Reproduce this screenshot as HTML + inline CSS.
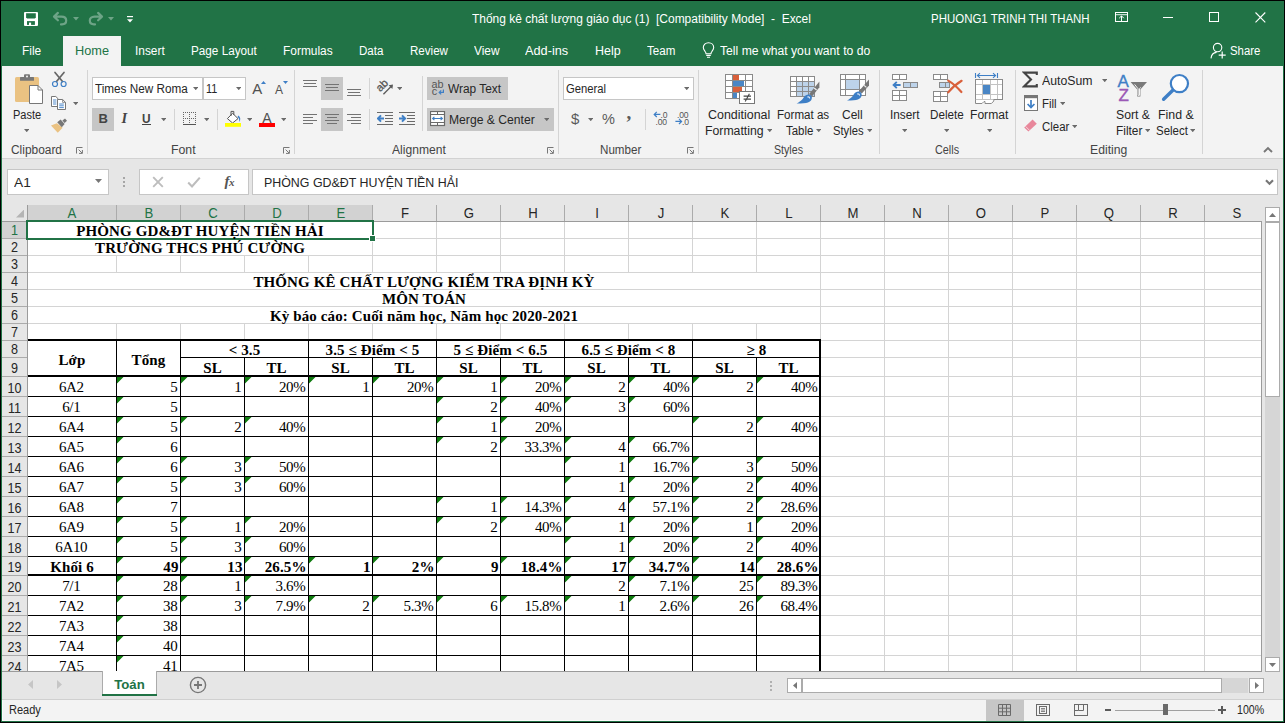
<!DOCTYPE html>
<html><head><meta charset="utf-8"><title>Excel</title>
<style>
html,body{margin:0;padding:0;}
body{width:1285px;height:723px;overflow:hidden;position:relative;background:#000;font-family:"Liberation Sans",sans-serif;}
#r{position:absolute;left:0;top:0;width:1285px;height:723px;overflow:hidden;}
#r div,#r span,#r svg{position:absolute;}
.t{white-space:pre;line-height:1;color:#262626;font-size:12px;}
.s{font-family:"Liberation Serif",serif;}
.b{font-weight:bold;}
</style></head><body><div id="r">
<!-- base -->
<div style="left:0px;top:0px;width:1285px;height:723px;background:#000;"></div>
<div style="left:1px;top:1px;width:1283px;height:721px;background:#217346;"></div>
<div style="left:2px;top:66px;width:1281px;height:92px;background:#f3f3f3;"></div>
<div style="left:63px;top:36px;width:58px;height:30px;background:#f3f3f3;"></div>
<div style="left:2px;top:158px;width:1281px;height:1px;background:#d2d2d2;"></div>
<div style="left:2px;top:159px;width:1281px;height:541px;background:#e6e6e6;"></div>
<div style="left:2px;top:699px;width:1281px;height:1px;background:#d0d0d0;"></div>
<div style="left:2px;top:700px;width:1281px;height:21px;background:#f3f3f3;"></div>
<div style="left:2px;top:720px;width:1281px;height:1px;background:#fbfbfb;"></div>
<div style="left:2px;top:700px;width:1px;height:21px;background:#fbfbfb;"></div>
<!-- grid -->
<div style="left:28px;top:222px;width:1233px;height:449px;background:#fff;"></div>
<div style="left:116px;top:222px;width:1px;height:449px;background:#d4d4d4;"></div>
<div style="left:180px;top:222px;width:1px;height:449px;background:#d4d4d4;"></div>
<div style="left:244px;top:222px;width:1px;height:449px;background:#d4d4d4;"></div>
<div style="left:308px;top:222px;width:1px;height:449px;background:#d4d4d4;"></div>
<div style="left:372px;top:222px;width:1px;height:449px;background:#d4d4d4;"></div>
<div style="left:436px;top:222px;width:1px;height:449px;background:#d4d4d4;"></div>
<div style="left:500px;top:222px;width:1px;height:449px;background:#d4d4d4;"></div>
<div style="left:564px;top:222px;width:1px;height:449px;background:#d4d4d4;"></div>
<div style="left:628px;top:222px;width:1px;height:449px;background:#d4d4d4;"></div>
<div style="left:692px;top:222px;width:1px;height:449px;background:#d4d4d4;"></div>
<div style="left:756px;top:222px;width:1px;height:449px;background:#d4d4d4;"></div>
<div style="left:820px;top:222px;width:1px;height:449px;background:#d4d4d4;"></div>
<div style="left:884px;top:222px;width:1px;height:449px;background:#d4d4d4;"></div>
<div style="left:948px;top:222px;width:1px;height:449px;background:#d4d4d4;"></div>
<div style="left:1012px;top:222px;width:1px;height:449px;background:#d4d4d4;"></div>
<div style="left:1076px;top:222px;width:1px;height:449px;background:#d4d4d4;"></div>
<div style="left:1140px;top:222px;width:1px;height:449px;background:#d4d4d4;"></div>
<div style="left:1204px;top:222px;width:1px;height:449px;background:#d4d4d4;"></div>
<div style="left:28px;top:238px;width:1233px;height:1px;background:#d4d4d4;"></div>
<div style="left:28px;top:255px;width:1233px;height:1px;background:#d4d4d4;"></div>
<div style="left:28px;top:272px;width:1233px;height:1px;background:#d4d4d4;"></div>
<div style="left:28px;top:289px;width:1233px;height:1px;background:#d4d4d4;"></div>
<div style="left:28px;top:306px;width:1233px;height:1px;background:#d4d4d4;"></div>
<div style="left:28px;top:323px;width:1233px;height:1px;background:#d4d4d4;"></div>
<div style="left:28px;top:340px;width:1233px;height:1px;background:#d4d4d4;"></div>
<div style="left:28px;top:357px;width:1233px;height:1px;background:#d4d4d4;"></div>
<div style="left:28px;top:376px;width:1233px;height:1px;background:#d4d4d4;"></div>
<div style="left:28px;top:396px;width:1233px;height:1px;background:#d4d4d4;"></div>
<div style="left:28px;top:416px;width:1233px;height:1px;background:#d4d4d4;"></div>
<div style="left:28px;top:436px;width:1233px;height:1px;background:#d4d4d4;"></div>
<div style="left:28px;top:456px;width:1233px;height:1px;background:#d4d4d4;"></div>
<div style="left:28px;top:476px;width:1233px;height:1px;background:#d4d4d4;"></div>
<div style="left:28px;top:496px;width:1233px;height:1px;background:#d4d4d4;"></div>
<div style="left:28px;top:516px;width:1233px;height:1px;background:#d4d4d4;"></div>
<div style="left:28px;top:536px;width:1233px;height:1px;background:#d4d4d4;"></div>
<div style="left:28px;top:556px;width:1233px;height:1px;background:#d4d4d4;"></div>
<div style="left:28px;top:575px;width:1233px;height:1px;background:#d4d4d4;"></div>
<div style="left:28px;top:595px;width:1233px;height:1px;background:#d4d4d4;"></div>
<div style="left:28px;top:615px;width:1233px;height:1px;background:#d4d4d4;"></div>
<div style="left:28px;top:635px;width:1233px;height:1px;background:#d4d4d4;"></div>
<div style="left:28px;top:655px;width:1233px;height:1px;background:#d4d4d4;"></div>
<div style="left:28px;top:222px;width:344px;height:16px;background:#fff;"></div>
<div style="left:28px;top:239px;width:344px;height:16px;background:#fff;"></div>
<div style="left:28px;top:273px;width:792px;height:16px;background:#fff;"></div>
<div style="left:28px;top:290px;width:792px;height:16px;background:#fff;"></div>
<div style="left:28px;top:307px;width:792px;height:16px;background:#fff;"></div>
<div style="left:28px;top:341px;width:792px;height:330px;background:#fff;"></div>
<div style="left:28px;top:339px;width:793px;height:2px;background:#000;"></div>
<div style="left:28px;top:375px;width:793px;height:2px;background:#000;"></div>
<div style="left:28px;top:574px;width:793px;height:2px;background:#000;"></div>
<div style="left:819px;top:339px;width:2px;height:332px;background:#000;"></div>
<div style="left:181px;top:357px;width:639px;height:1px;background:#000;"></div>
<div style="left:28px;top:396px;width:792px;height:1px;background:#000;"></div>
<div style="left:28px;top:416px;width:792px;height:1px;background:#000;"></div>
<div style="left:28px;top:436px;width:792px;height:1px;background:#000;"></div>
<div style="left:28px;top:456px;width:792px;height:1px;background:#000;"></div>
<div style="left:28px;top:476px;width:792px;height:1px;background:#000;"></div>
<div style="left:28px;top:496px;width:792px;height:1px;background:#000;"></div>
<div style="left:28px;top:516px;width:792px;height:1px;background:#000;"></div>
<div style="left:28px;top:536px;width:792px;height:1px;background:#000;"></div>
<div style="left:28px;top:556px;width:792px;height:1px;background:#000;"></div>
<div style="left:28px;top:595px;width:792px;height:1px;background:#000;"></div>
<div style="left:28px;top:615px;width:792px;height:1px;background:#000;"></div>
<div style="left:28px;top:635px;width:792px;height:1px;background:#000;"></div>
<div style="left:28px;top:655px;width:792px;height:1px;background:#000;"></div>
<div style="left:116px;top:341px;width:1px;height:330px;background:#000;"></div>
<div style="left:180px;top:341px;width:1px;height:330px;background:#000;"></div>
<div style="left:244px;top:358px;width:1px;height:313px;background:#000;"></div>
<div style="left:308px;top:341px;width:1px;height:330px;background:#000;"></div>
<div style="left:372px;top:358px;width:1px;height:313px;background:#000;"></div>
<div style="left:436px;top:341px;width:1px;height:330px;background:#000;"></div>
<div style="left:500px;top:358px;width:1px;height:313px;background:#000;"></div>
<div style="left:564px;top:341px;width:1px;height:330px;background:#000;"></div>
<div style="left:628px;top:358px;width:1px;height:313px;background:#000;"></div>
<div style="left:692px;top:341px;width:1px;height:330px;background:#000;"></div>
<div style="left:756px;top:358px;width:1px;height:313px;background:#000;"></div>
<div style="left:2px;top:205px;width:1260px;height:17px;background:#e6e6e6;"></div>
<div style="left:28px;top:205px;width:345px;height:16px;background:#d2d2d2;"></div>
<div style="left:116px;top:205px;width:1px;height:16px;background:#ababab;"></div>
<div style="left:180px;top:205px;width:1px;height:16px;background:#ababab;"></div>
<div style="left:244px;top:205px;width:1px;height:16px;background:#ababab;"></div>
<div style="left:308px;top:205px;width:1px;height:16px;background:#ababab;"></div>
<div style="left:372px;top:205px;width:1px;height:16px;background:#ababab;"></div>
<div style="left:436px;top:205px;width:1px;height:16px;background:#ababab;"></div>
<div style="left:500px;top:205px;width:1px;height:16px;background:#ababab;"></div>
<div style="left:564px;top:205px;width:1px;height:16px;background:#ababab;"></div>
<div style="left:628px;top:205px;width:1px;height:16px;background:#ababab;"></div>
<div style="left:692px;top:205px;width:1px;height:16px;background:#ababab;"></div>
<div style="left:756px;top:205px;width:1px;height:16px;background:#ababab;"></div>
<div style="left:820px;top:205px;width:1px;height:16px;background:#ababab;"></div>
<div style="left:884px;top:205px;width:1px;height:16px;background:#ababab;"></div>
<div style="left:948px;top:205px;width:1px;height:16px;background:#ababab;"></div>
<div style="left:1012px;top:205px;width:1px;height:16px;background:#ababab;"></div>
<div style="left:1076px;top:205px;width:1px;height:16px;background:#ababab;"></div>
<div style="left:1140px;top:205px;width:1px;height:16px;background:#ababab;"></div>
<div style="left:1204px;top:205px;width:1px;height:16px;background:#ababab;"></div>
<div style="left:2px;top:221px;width:1260px;height:1px;background:#9b9b9b;"></div>
<div style="left:27px;top:205px;width:1px;height:466px;background:#9b9b9b;"></div>
<svg style="left:15.5px;top:209.3px" width="8.5" height="8.5" viewBox="0 0 8.5 8.5"><path d="M8.5 0 L8.5 8.5 L0 8.5 Z" fill="#b4b4b4"/></svg>
<span class="t " style="left:52.0px;top:206.3px;width:40px;text-align:center;font-size:14px;transform:scaleX(0.94);color:#217346;">A</span>
<span class="t " style="left:128.5px;top:206.3px;width:40px;text-align:center;font-size:14px;transform:scaleX(0.94);color:#217346;">B</span>
<span class="t " style="left:192.5px;top:206.3px;width:40px;text-align:center;font-size:14px;transform:scaleX(0.94);color:#217346;">C</span>
<span class="t " style="left:256.5px;top:206.3px;width:40px;text-align:center;font-size:14px;transform:scaleX(0.94);color:#217346;">D</span>
<span class="t " style="left:320.5px;top:206.3px;width:40px;text-align:center;font-size:14px;transform:scaleX(0.94);color:#217346;">E</span>
<span class="t " style="left:384.5px;top:206.3px;width:40px;text-align:center;font-size:14px;transform:scaleX(0.94);color:#262626;">F</span>
<span class="t " style="left:448.5px;top:206.3px;width:40px;text-align:center;font-size:14px;transform:scaleX(0.94);color:#262626;">G</span>
<span class="t " style="left:512.5px;top:206.3px;width:40px;text-align:center;font-size:14px;transform:scaleX(0.94);color:#262626;">H</span>
<span class="t " style="left:576.5px;top:206.3px;width:40px;text-align:center;font-size:14px;transform:scaleX(0.94);color:#262626;">I</span>
<span class="t " style="left:640.5px;top:206.3px;width:40px;text-align:center;font-size:14px;transform:scaleX(0.94);color:#262626;">J</span>
<span class="t " style="left:704.5px;top:206.3px;width:40px;text-align:center;font-size:14px;transform:scaleX(0.94);color:#262626;">K</span>
<span class="t " style="left:768.5px;top:206.3px;width:40px;text-align:center;font-size:14px;transform:scaleX(0.94);color:#262626;">L</span>
<span class="t " style="left:832.5px;top:206.3px;width:40px;text-align:center;font-size:14px;transform:scaleX(0.94);color:#262626;">M</span>
<span class="t " style="left:896.5px;top:206.3px;width:40px;text-align:center;font-size:14px;transform:scaleX(0.94);color:#262626;">N</span>
<span class="t " style="left:960.5px;top:206.3px;width:40px;text-align:center;font-size:14px;transform:scaleX(0.94);color:#262626;">O</span>
<span class="t " style="left:1024.5px;top:206.3px;width:40px;text-align:center;font-size:14px;transform:scaleX(0.94);color:#262626;">P</span>
<span class="t " style="left:1088.5px;top:206.3px;width:40px;text-align:center;font-size:14px;transform:scaleX(0.94);color:#262626;">Q</span>
<span class="t " style="left:1152.5px;top:206.3px;width:40px;text-align:center;font-size:14px;transform:scaleX(0.94);color:#262626;">R</span>
<span class="t " style="left:1216.5px;top:206.3px;width:40px;text-align:center;font-size:14px;transform:scaleX(0.94);color:#262626;">S</span>
<div style="left:2px;top:222px;width:25px;height:449px;background:#e6e6e6;"></div>
<div style="left:2px;top:222px;width:25px;height:17px;background:#d2d2d2;"></div>
<div style="left:2px;top:238px;width:25px;height:1px;background:#ababab;"></div>
<span class="t " style="left:2px;top:223px;width:25px;text-align:center;font-size:14px;transform:scaleX(0.9);color:#217346;">1</span>
<div style="left:2px;top:255px;width:25px;height:1px;background:#ababab;"></div>
<span class="t " style="left:2px;top:240px;width:25px;text-align:center;font-size:14px;transform:scaleX(0.9);color:#262626;">2</span>
<div style="left:2px;top:272px;width:25px;height:1px;background:#ababab;"></div>
<span class="t " style="left:2px;top:257px;width:25px;text-align:center;font-size:14px;transform:scaleX(0.9);color:#262626;">3</span>
<div style="left:2px;top:289px;width:25px;height:1px;background:#ababab;"></div>
<span class="t " style="left:2px;top:274px;width:25px;text-align:center;font-size:14px;transform:scaleX(0.9);color:#262626;">4</span>
<div style="left:2px;top:306px;width:25px;height:1px;background:#ababab;"></div>
<span class="t " style="left:2px;top:291px;width:25px;text-align:center;font-size:14px;transform:scaleX(0.9);color:#262626;">5</span>
<div style="left:2px;top:323px;width:25px;height:1px;background:#ababab;"></div>
<span class="t " style="left:2px;top:308px;width:25px;text-align:center;font-size:14px;transform:scaleX(0.9);color:#262626;">6</span>
<div style="left:2px;top:340px;width:25px;height:1px;background:#ababab;"></div>
<span class="t " style="left:2px;top:325px;width:25px;text-align:center;font-size:14px;transform:scaleX(0.9);color:#262626;">7</span>
<div style="left:2px;top:357px;width:25px;height:1px;background:#ababab;"></div>
<span class="t " style="left:2px;top:342px;width:25px;text-align:center;font-size:14px;transform:scaleX(0.9);color:#262626;">8</span>
<div style="left:2px;top:376px;width:25px;height:1px;background:#ababab;"></div>
<span class="t " style="left:2px;top:360.5px;width:25px;text-align:center;font-size:14px;transform:scaleX(0.9);color:#262626;">9</span>
<div style="left:2px;top:396px;width:25px;height:1px;background:#ababab;"></div>
<span class="t " style="left:2px;top:381px;width:25px;text-align:center;font-size:14px;transform:scaleX(0.9);color:#262626;">10</span>
<div style="left:2px;top:416px;width:25px;height:1px;background:#ababab;"></div>
<span class="t " style="left:2px;top:401px;width:25px;text-align:center;font-size:14px;transform:scaleX(0.9);color:#262626;">11</span>
<div style="left:2px;top:436px;width:25px;height:1px;background:#ababab;"></div>
<span class="t " style="left:2px;top:421px;width:25px;text-align:center;font-size:14px;transform:scaleX(0.9);color:#262626;">12</span>
<div style="left:2px;top:456px;width:25px;height:1px;background:#ababab;"></div>
<span class="t " style="left:2px;top:441px;width:25px;text-align:center;font-size:14px;transform:scaleX(0.9);color:#262626;">13</span>
<div style="left:2px;top:476px;width:25px;height:1px;background:#ababab;"></div>
<span class="t " style="left:2px;top:461px;width:25px;text-align:center;font-size:14px;transform:scaleX(0.9);color:#262626;">14</span>
<div style="left:2px;top:496px;width:25px;height:1px;background:#ababab;"></div>
<span class="t " style="left:2px;top:481px;width:25px;text-align:center;font-size:14px;transform:scaleX(0.9);color:#262626;">15</span>
<div style="left:2px;top:516px;width:25px;height:1px;background:#ababab;"></div>
<span class="t " style="left:2px;top:501px;width:25px;text-align:center;font-size:14px;transform:scaleX(0.9);color:#262626;">16</span>
<div style="left:2px;top:536px;width:25px;height:1px;background:#ababab;"></div>
<span class="t " style="left:2px;top:521px;width:25px;text-align:center;font-size:14px;transform:scaleX(0.9);color:#262626;">17</span>
<div style="left:2px;top:556px;width:25px;height:1px;background:#ababab;"></div>
<span class="t " style="left:2px;top:541px;width:25px;text-align:center;font-size:14px;transform:scaleX(0.9);color:#262626;">18</span>
<div style="left:2px;top:575px;width:25px;height:1px;background:#ababab;"></div>
<span class="t " style="left:2px;top:560px;width:25px;text-align:center;font-size:14px;transform:scaleX(0.9);color:#262626;">19</span>
<div style="left:2px;top:595px;width:25px;height:1px;background:#ababab;"></div>
<span class="t " style="left:2px;top:580px;width:25px;text-align:center;font-size:14px;transform:scaleX(0.9);color:#262626;">20</span>
<div style="left:2px;top:615px;width:25px;height:1px;background:#ababab;"></div>
<span class="t " style="left:2px;top:600px;width:25px;text-align:center;font-size:14px;transform:scaleX(0.9);color:#262626;">21</span>
<div style="left:2px;top:635px;width:25px;height:1px;background:#ababab;"></div>
<span class="t " style="left:2px;top:620px;width:25px;text-align:center;font-size:14px;transform:scaleX(0.9);color:#262626;">22</span>
<div style="left:2px;top:655px;width:25px;height:1px;background:#ababab;"></div>
<span class="t " style="left:2px;top:640px;width:25px;text-align:center;font-size:14px;transform:scaleX(0.9);color:#262626;">23</span>
<span class="t " style="left:2px;top:660px;width:25px;text-align:center;font-size:14px;transform:scaleX(0.9);color:#262626;">24</span>
<div style="left:1261px;top:221px;width:1px;height:451px;background:#9b9b9b;"></div>
<div style="left:2px;top:671px;width:1260px;height:1px;background:#9b9b9b;"></div>
<div style="left:26px;top:220px;width:344px;height:16px;border:2px solid #217346;"></div>
<div style="left:369px;top:235px;width:7px;height:7px;background:#fff;"></div>
<div style="left:370px;top:236px;width:5px;height:5px;background:#217346;"></div>
<span class="t s b" style="left:28px;top:223.5px;width:344px;font-size:15px;letter-spacing:0.12px;text-align:center;color:#000;">PHÒNG GD&amp;ĐT HUYỆN TIỀN HẢI</span>
<span class="t s b" style="left:28px;top:240.5px;width:344px;font-size:15px;letter-spacing:0.12px;text-align:center;color:#000;">TRƯỜNG THCS PHÚ CƯỜNG</span>
<span class="t s b" style="left:28px;top:274.5px;width:792px;font-size:15px;letter-spacing:0.12px;text-align:center;color:#000;">THỐNG KÊ CHẤT LƯỢNG KIỂM TRA ĐỊNH KỲ</span>
<span class="t s b" style="left:28px;top:291.5px;width:792px;font-size:15px;letter-spacing:0.12px;text-align:center;color:#000;">MÔN TOÁN</span>
<span class="t s b" style="left:28px;top:308.5px;width:792px;font-size:15px;letter-spacing:0.12px;text-align:center;color:#000;">Kỳ báo cáo: Cuối năm học, Năm học 2020-2021</span>
<span class="t s b" style="left:28px;top:352.5px;width:88px;font-size:15px;letter-spacing:0.12px;text-align:center;color:#000;">Lớp</span>
<span class="t s b" style="left:117px;top:352.5px;width:63px;font-size:15px;letter-spacing:0.12px;text-align:center;color:#000;">Tổng</span>
<span class="t s b" style="left:181px;top:342.5px;width:127px;font-size:15px;letter-spacing:0.12px;text-align:center;color:#000;">&lt; 3.5</span>
<span class="t s b" style="left:181px;top:360.5px;width:63px;font-size:15px;letter-spacing:0.12px;text-align:center;color:#000;">SL</span>
<span class="t s b" style="left:245px;top:360.5px;width:63px;font-size:15px;letter-spacing:0.12px;text-align:center;color:#000;">TL</span>
<span class="t s b" style="left:309px;top:342.5px;width:127px;font-size:15px;letter-spacing:0.12px;text-align:center;color:#000;">3.5 ≤ Điểm &lt; 5</span>
<span class="t s b" style="left:309px;top:360.5px;width:63px;font-size:15px;letter-spacing:0.12px;text-align:center;color:#000;">SL</span>
<span class="t s b" style="left:373px;top:360.5px;width:63px;font-size:15px;letter-spacing:0.12px;text-align:center;color:#000;">TL</span>
<span class="t s b" style="left:437px;top:342.5px;width:127px;font-size:15px;letter-spacing:0.12px;text-align:center;color:#000;">5 ≤ Điểm &lt; 6.5</span>
<span class="t s b" style="left:437px;top:360.5px;width:63px;font-size:15px;letter-spacing:0.12px;text-align:center;color:#000;">SL</span>
<span class="t s b" style="left:501px;top:360.5px;width:63px;font-size:15px;letter-spacing:0.12px;text-align:center;color:#000;">TL</span>
<span class="t s b" style="left:565px;top:342.5px;width:127px;font-size:15px;letter-spacing:0.12px;text-align:center;color:#000;">6.5 ≤ Điểm &lt; 8</span>
<span class="t s b" style="left:565px;top:360.5px;width:63px;font-size:15px;letter-spacing:0.12px;text-align:center;color:#000;">SL</span>
<span class="t s b" style="left:629px;top:360.5px;width:63px;font-size:15px;letter-spacing:0.12px;text-align:center;color:#000;">TL</span>
<span class="t s b" style="left:693px;top:342.5px;width:127px;font-size:15px;letter-spacing:0.12px;text-align:center;color:#000;">≥ 8</span>
<span class="t s b" style="left:693px;top:360.5px;width:63px;font-size:15px;letter-spacing:0.12px;text-align:center;color:#000;">SL</span>
<span class="t s b" style="left:757px;top:360.5px;width:63px;font-size:15px;letter-spacing:0.12px;text-align:center;color:#000;">TL</span>
<span class="t s" style="left:28px;top:379.5px;width:86.5px;font-size:15px;letter-spacing:-0.38px;text-align:center;color:#000;">6A2</span>
<span class="t s" style="left:117px;top:379.5px;width:60.32px;font-size:15px;letter-spacing:-0.38px;text-align:right;color:#000;">5</span>
<span class="t s" style="left:181px;top:379.5px;width:60.32px;font-size:15px;letter-spacing:-0.38px;text-align:right;color:#000;">1</span>
<span class="t s" style="left:245px;top:379.5px;width:60.32px;font-size:15px;letter-spacing:-0.38px;text-align:right;color:#000;">20%</span>
<span class="t s" style="left:309px;top:379.5px;width:60.32px;font-size:15px;letter-spacing:-0.38px;text-align:right;color:#000;">1</span>
<span class="t s" style="left:373px;top:379.5px;width:60.32px;font-size:15px;letter-spacing:-0.38px;text-align:right;color:#000;">20%</span>
<span class="t s" style="left:437px;top:379.5px;width:60.32px;font-size:15px;letter-spacing:-0.38px;text-align:right;color:#000;">1</span>
<span class="t s" style="left:501px;top:379.5px;width:60.32px;font-size:15px;letter-spacing:-0.38px;text-align:right;color:#000;">20%</span>
<span class="t s" style="left:565px;top:379.5px;width:60.32px;font-size:15px;letter-spacing:-0.38px;text-align:right;color:#000;">2</span>
<span class="t s" style="left:629px;top:379.5px;width:60.32px;font-size:15px;letter-spacing:-0.38px;text-align:right;color:#000;">40%</span>
<span class="t s" style="left:693px;top:379.5px;width:60.32px;font-size:15px;letter-spacing:-0.38px;text-align:right;color:#000;">2</span>
<span class="t s" style="left:757px;top:379.5px;width:60.32px;font-size:15px;letter-spacing:-0.38px;text-align:right;color:#000;">40%</span>
<span class="t s" style="left:28px;top:399.5px;width:86.5px;font-size:15px;letter-spacing:-0.38px;text-align:center;color:#000;">6/1</span>
<span class="t s" style="left:117px;top:399.5px;width:60.32px;font-size:15px;letter-spacing:-0.38px;text-align:right;color:#000;">5</span>
<span class="t s" style="left:437px;top:399.5px;width:60.32px;font-size:15px;letter-spacing:-0.38px;text-align:right;color:#000;">2</span>
<span class="t s" style="left:501px;top:399.5px;width:60.32px;font-size:15px;letter-spacing:-0.38px;text-align:right;color:#000;">40%</span>
<span class="t s" style="left:565px;top:399.5px;width:60.32px;font-size:15px;letter-spacing:-0.38px;text-align:right;color:#000;">3</span>
<span class="t s" style="left:629px;top:399.5px;width:60.32px;font-size:15px;letter-spacing:-0.38px;text-align:right;color:#000;">60%</span>
<span class="t s" style="left:28px;top:419.5px;width:86.5px;font-size:15px;letter-spacing:-0.38px;text-align:center;color:#000;">6A4</span>
<span class="t s" style="left:117px;top:419.5px;width:60.32px;font-size:15px;letter-spacing:-0.38px;text-align:right;color:#000;">5</span>
<span class="t s" style="left:181px;top:419.5px;width:60.32px;font-size:15px;letter-spacing:-0.38px;text-align:right;color:#000;">2</span>
<span class="t s" style="left:245px;top:419.5px;width:60.32px;font-size:15px;letter-spacing:-0.38px;text-align:right;color:#000;">40%</span>
<span class="t s" style="left:437px;top:419.5px;width:60.32px;font-size:15px;letter-spacing:-0.38px;text-align:right;color:#000;">1</span>
<span class="t s" style="left:501px;top:419.5px;width:60.32px;font-size:15px;letter-spacing:-0.38px;text-align:right;color:#000;">20%</span>
<span class="t s" style="left:693px;top:419.5px;width:60.32px;font-size:15px;letter-spacing:-0.38px;text-align:right;color:#000;">2</span>
<span class="t s" style="left:757px;top:419.5px;width:60.32px;font-size:15px;letter-spacing:-0.38px;text-align:right;color:#000;">40%</span>
<span class="t s" style="left:28px;top:439.5px;width:86.5px;font-size:15px;letter-spacing:-0.38px;text-align:center;color:#000;">6A5</span>
<span class="t s" style="left:117px;top:439.5px;width:60.32px;font-size:15px;letter-spacing:-0.38px;text-align:right;color:#000;">6</span>
<span class="t s" style="left:437px;top:439.5px;width:60.32px;font-size:15px;letter-spacing:-0.38px;text-align:right;color:#000;">2</span>
<span class="t s" style="left:501px;top:439.5px;width:60.32px;font-size:15px;letter-spacing:-0.38px;text-align:right;color:#000;">33.3%</span>
<span class="t s" style="left:565px;top:439.5px;width:60.32px;font-size:15px;letter-spacing:-0.38px;text-align:right;color:#000;">4</span>
<span class="t s" style="left:629px;top:439.5px;width:60.32px;font-size:15px;letter-spacing:-0.38px;text-align:right;color:#000;">66.7%</span>
<span class="t s" style="left:28px;top:459.5px;width:86.5px;font-size:15px;letter-spacing:-0.38px;text-align:center;color:#000;">6A6</span>
<span class="t s" style="left:117px;top:459.5px;width:60.32px;font-size:15px;letter-spacing:-0.38px;text-align:right;color:#000;">6</span>
<span class="t s" style="left:181px;top:459.5px;width:60.32px;font-size:15px;letter-spacing:-0.38px;text-align:right;color:#000;">3</span>
<span class="t s" style="left:245px;top:459.5px;width:60.32px;font-size:15px;letter-spacing:-0.38px;text-align:right;color:#000;">50%</span>
<span class="t s" style="left:565px;top:459.5px;width:60.32px;font-size:15px;letter-spacing:-0.38px;text-align:right;color:#000;">1</span>
<span class="t s" style="left:629px;top:459.5px;width:60.32px;font-size:15px;letter-spacing:-0.38px;text-align:right;color:#000;">16.7%</span>
<span class="t s" style="left:693px;top:459.5px;width:60.32px;font-size:15px;letter-spacing:-0.38px;text-align:right;color:#000;">3</span>
<span class="t s" style="left:757px;top:459.5px;width:60.32px;font-size:15px;letter-spacing:-0.38px;text-align:right;color:#000;">50%</span>
<span class="t s" style="left:28px;top:479.5px;width:86.5px;font-size:15px;letter-spacing:-0.38px;text-align:center;color:#000;">6A7</span>
<span class="t s" style="left:117px;top:479.5px;width:60.32px;font-size:15px;letter-spacing:-0.38px;text-align:right;color:#000;">5</span>
<span class="t s" style="left:181px;top:479.5px;width:60.32px;font-size:15px;letter-spacing:-0.38px;text-align:right;color:#000;">3</span>
<span class="t s" style="left:245px;top:479.5px;width:60.32px;font-size:15px;letter-spacing:-0.38px;text-align:right;color:#000;">60%</span>
<span class="t s" style="left:565px;top:479.5px;width:60.32px;font-size:15px;letter-spacing:-0.38px;text-align:right;color:#000;">1</span>
<span class="t s" style="left:629px;top:479.5px;width:60.32px;font-size:15px;letter-spacing:-0.38px;text-align:right;color:#000;">20%</span>
<span class="t s" style="left:693px;top:479.5px;width:60.32px;font-size:15px;letter-spacing:-0.38px;text-align:right;color:#000;">2</span>
<span class="t s" style="left:757px;top:479.5px;width:60.32px;font-size:15px;letter-spacing:-0.38px;text-align:right;color:#000;">40%</span>
<span class="t s" style="left:28px;top:499.5px;width:86.5px;font-size:15px;letter-spacing:-0.38px;text-align:center;color:#000;">6A8</span>
<span class="t s" style="left:117px;top:499.5px;width:60.32px;font-size:15px;letter-spacing:-0.38px;text-align:right;color:#000;">7</span>
<span class="t s" style="left:437px;top:499.5px;width:60.32px;font-size:15px;letter-spacing:-0.38px;text-align:right;color:#000;">1</span>
<span class="t s" style="left:501px;top:499.5px;width:60.32px;font-size:15px;letter-spacing:-0.38px;text-align:right;color:#000;">14.3%</span>
<span class="t s" style="left:565px;top:499.5px;width:60.32px;font-size:15px;letter-spacing:-0.38px;text-align:right;color:#000;">4</span>
<span class="t s" style="left:629px;top:499.5px;width:60.32px;font-size:15px;letter-spacing:-0.38px;text-align:right;color:#000;">57.1%</span>
<span class="t s" style="left:693px;top:499.5px;width:60.32px;font-size:15px;letter-spacing:-0.38px;text-align:right;color:#000;">2</span>
<span class="t s" style="left:757px;top:499.5px;width:60.32px;font-size:15px;letter-spacing:-0.38px;text-align:right;color:#000;">28.6%</span>
<span class="t s" style="left:28px;top:519.5px;width:86.5px;font-size:15px;letter-spacing:-0.38px;text-align:center;color:#000;">6A9</span>
<span class="t s" style="left:117px;top:519.5px;width:60.32px;font-size:15px;letter-spacing:-0.38px;text-align:right;color:#000;">5</span>
<span class="t s" style="left:181px;top:519.5px;width:60.32px;font-size:15px;letter-spacing:-0.38px;text-align:right;color:#000;">1</span>
<span class="t s" style="left:245px;top:519.5px;width:60.32px;font-size:15px;letter-spacing:-0.38px;text-align:right;color:#000;">20%</span>
<span class="t s" style="left:437px;top:519.5px;width:60.32px;font-size:15px;letter-spacing:-0.38px;text-align:right;color:#000;">2</span>
<span class="t s" style="left:501px;top:519.5px;width:60.32px;font-size:15px;letter-spacing:-0.38px;text-align:right;color:#000;">40%</span>
<span class="t s" style="left:565px;top:519.5px;width:60.32px;font-size:15px;letter-spacing:-0.38px;text-align:right;color:#000;">1</span>
<span class="t s" style="left:629px;top:519.5px;width:60.32px;font-size:15px;letter-spacing:-0.38px;text-align:right;color:#000;">20%</span>
<span class="t s" style="left:693px;top:519.5px;width:60.32px;font-size:15px;letter-spacing:-0.38px;text-align:right;color:#000;">1</span>
<span class="t s" style="left:757px;top:519.5px;width:60.32px;font-size:15px;letter-spacing:-0.38px;text-align:right;color:#000;">20%</span>
<span class="t s" style="left:28px;top:539.5px;width:86.5px;font-size:15px;letter-spacing:-0.38px;text-align:center;color:#000;">6A10</span>
<span class="t s" style="left:117px;top:539.5px;width:60.32px;font-size:15px;letter-spacing:-0.38px;text-align:right;color:#000;">5</span>
<span class="t s" style="left:181px;top:539.5px;width:60.32px;font-size:15px;letter-spacing:-0.38px;text-align:right;color:#000;">3</span>
<span class="t s" style="left:245px;top:539.5px;width:60.32px;font-size:15px;letter-spacing:-0.38px;text-align:right;color:#000;">60%</span>
<span class="t s" style="left:565px;top:539.5px;width:60.32px;font-size:15px;letter-spacing:-0.38px;text-align:right;color:#000;">1</span>
<span class="t s" style="left:629px;top:539.5px;width:60.32px;font-size:15px;letter-spacing:-0.38px;text-align:right;color:#000;">20%</span>
<span class="t s" style="left:693px;top:539.5px;width:60.32px;font-size:15px;letter-spacing:-0.38px;text-align:right;color:#000;">2</span>
<span class="t s" style="left:757px;top:539.5px;width:60.32px;font-size:15px;letter-spacing:-0.38px;text-align:right;color:#000;">40%</span>
<span class="t s b" style="left:28px;top:559.5px;width:88px;font-size:15px;letter-spacing:0.12px;text-align:center;color:#000;">Khối 6</span>
<span class="t s b" style="left:117px;top:559.5px;width:61.62px;font-size:15px;letter-spacing:0.12px;text-align:right;color:#000;">49</span>
<span class="t s b" style="left:181px;top:559.5px;width:61.62px;font-size:15px;letter-spacing:0.12px;text-align:right;color:#000;">13</span>
<span class="t s b" style="left:245px;top:559.5px;width:61.62px;font-size:15px;letter-spacing:0.12px;text-align:right;color:#000;">26.5%</span>
<span class="t s b" style="left:309px;top:559.5px;width:61.62px;font-size:15px;letter-spacing:0.12px;text-align:right;color:#000;">1</span>
<span class="t s b" style="left:373px;top:559.5px;width:61.62px;font-size:15px;letter-spacing:0.12px;text-align:right;color:#000;">2%</span>
<span class="t s b" style="left:437px;top:559.5px;width:61.62px;font-size:15px;letter-spacing:0.12px;text-align:right;color:#000;">9</span>
<span class="t s b" style="left:501px;top:559.5px;width:61.62px;font-size:15px;letter-spacing:0.12px;text-align:right;color:#000;">18.4%</span>
<span class="t s b" style="left:565px;top:559.5px;width:61.62px;font-size:15px;letter-spacing:0.12px;text-align:right;color:#000;">17</span>
<span class="t s b" style="left:629px;top:559.5px;width:61.62px;font-size:15px;letter-spacing:0.12px;text-align:right;color:#000;">34.7%</span>
<span class="t s b" style="left:693px;top:559.5px;width:61.62px;font-size:15px;letter-spacing:0.12px;text-align:right;color:#000;">14</span>
<span class="t s b" style="left:757px;top:559.5px;width:61.62px;font-size:15px;letter-spacing:0.12px;text-align:right;color:#000;">28.6%</span>
<span class="t s" style="left:28px;top:578.5px;width:86.5px;font-size:15px;letter-spacing:-0.38px;text-align:center;color:#000;">7/1</span>
<span class="t s" style="left:117px;top:578.5px;width:60.32px;font-size:15px;letter-spacing:-0.38px;text-align:right;color:#000;">28</span>
<span class="t s" style="left:181px;top:578.5px;width:60.32px;font-size:15px;letter-spacing:-0.38px;text-align:right;color:#000;">1</span>
<span class="t s" style="left:245px;top:578.5px;width:60.32px;font-size:15px;letter-spacing:-0.38px;text-align:right;color:#000;">3.6%</span>
<span class="t s" style="left:565px;top:578.5px;width:60.32px;font-size:15px;letter-spacing:-0.38px;text-align:right;color:#000;">2</span>
<span class="t s" style="left:629px;top:578.5px;width:60.32px;font-size:15px;letter-spacing:-0.38px;text-align:right;color:#000;">7.1%</span>
<span class="t s" style="left:693px;top:578.5px;width:60.32px;font-size:15px;letter-spacing:-0.38px;text-align:right;color:#000;">25</span>
<span class="t s" style="left:757px;top:578.5px;width:60.32px;font-size:15px;letter-spacing:-0.38px;text-align:right;color:#000;">89.3%</span>
<span class="t s" style="left:28px;top:598.5px;width:86.5px;font-size:15px;letter-spacing:-0.38px;text-align:center;color:#000;">7A2</span>
<span class="t s" style="left:117px;top:598.5px;width:60.32px;font-size:15px;letter-spacing:-0.38px;text-align:right;color:#000;">38</span>
<span class="t s" style="left:181px;top:598.5px;width:60.32px;font-size:15px;letter-spacing:-0.38px;text-align:right;color:#000;">3</span>
<span class="t s" style="left:245px;top:598.5px;width:60.32px;font-size:15px;letter-spacing:-0.38px;text-align:right;color:#000;">7.9%</span>
<span class="t s" style="left:309px;top:598.5px;width:60.32px;font-size:15px;letter-spacing:-0.38px;text-align:right;color:#000;">2</span>
<span class="t s" style="left:373px;top:598.5px;width:60.32px;font-size:15px;letter-spacing:-0.38px;text-align:right;color:#000;">5.3%</span>
<span class="t s" style="left:437px;top:598.5px;width:60.32px;font-size:15px;letter-spacing:-0.38px;text-align:right;color:#000;">6</span>
<span class="t s" style="left:501px;top:598.5px;width:60.32px;font-size:15px;letter-spacing:-0.38px;text-align:right;color:#000;">15.8%</span>
<span class="t s" style="left:565px;top:598.5px;width:60.32px;font-size:15px;letter-spacing:-0.38px;text-align:right;color:#000;">1</span>
<span class="t s" style="left:629px;top:598.5px;width:60.32px;font-size:15px;letter-spacing:-0.38px;text-align:right;color:#000;">2.6%</span>
<span class="t s" style="left:693px;top:598.5px;width:60.32px;font-size:15px;letter-spacing:-0.38px;text-align:right;color:#000;">26</span>
<span class="t s" style="left:757px;top:598.5px;width:60.32px;font-size:15px;letter-spacing:-0.38px;text-align:right;color:#000;">68.4%</span>
<span class="t s" style="left:28px;top:618.5px;width:86.5px;font-size:15px;letter-spacing:-0.38px;text-align:center;color:#000;">7A3</span>
<span class="t s" style="left:117px;top:618.5px;width:60.32px;font-size:15px;letter-spacing:-0.38px;text-align:right;color:#000;">38</span>
<span class="t s" style="left:28px;top:638.5px;width:86.5px;font-size:15px;letter-spacing:-0.38px;text-align:center;color:#000;">7A4</span>
<span class="t s" style="left:117px;top:638.5px;width:60.32px;font-size:15px;letter-spacing:-0.38px;text-align:right;color:#000;">40</span>
<span class="t s" style="left:28px;top:658.5px;width:86.5px;font-size:15px;letter-spacing:-0.38px;text-align:center;color:#000;">7A5</span>
<span class="t s" style="left:117px;top:658.5px;width:60.32px;font-size:15px;letter-spacing:-0.38px;text-align:right;color:#000;">41</span>
<svg style="left:0;top:0" width="1285" height="671" viewBox="0 0 1285 671"><path d="M117 377h6.5l-6.5 6.5z M181 377h6.5l-6.5 6.5z M245 377h6.5l-6.5 6.5z M309 377h6.5l-6.5 6.5z M373 377h6.5l-6.5 6.5z M437 377h6.5l-6.5 6.5z M501 377h6.5l-6.5 6.5z M565 377h6.5l-6.5 6.5z M629 377h6.5l-6.5 6.5z M693 377h6.5l-6.5 6.5z M757 377h6.5l-6.5 6.5z M117 397h6.5l-6.5 6.5z M437 397h6.5l-6.5 6.5z M501 397h6.5l-6.5 6.5z M565 397h6.5l-6.5 6.5z M629 397h6.5l-6.5 6.5z M117 417h6.5l-6.5 6.5z M181 417h6.5l-6.5 6.5z M245 417h6.5l-6.5 6.5z M437 417h6.5l-6.5 6.5z M501 417h6.5l-6.5 6.5z M693 417h6.5l-6.5 6.5z M757 417h6.5l-6.5 6.5z M117 437h6.5l-6.5 6.5z M437 437h6.5l-6.5 6.5z M501 437h6.5l-6.5 6.5z M565 437h6.5l-6.5 6.5z M629 437h6.5l-6.5 6.5z M117 457h6.5l-6.5 6.5z M181 457h6.5l-6.5 6.5z M245 457h6.5l-6.5 6.5z M565 457h6.5l-6.5 6.5z M629 457h6.5l-6.5 6.5z M693 457h6.5l-6.5 6.5z M757 457h6.5l-6.5 6.5z M117 477h6.5l-6.5 6.5z M181 477h6.5l-6.5 6.5z M245 477h6.5l-6.5 6.5z M565 477h6.5l-6.5 6.5z M629 477h6.5l-6.5 6.5z M693 477h6.5l-6.5 6.5z M757 477h6.5l-6.5 6.5z M117 497h6.5l-6.5 6.5z M437 497h6.5l-6.5 6.5z M501 497h6.5l-6.5 6.5z M565 497h6.5l-6.5 6.5z M629 497h6.5l-6.5 6.5z M693 497h6.5l-6.5 6.5z M757 497h6.5l-6.5 6.5z M117 517h6.5l-6.5 6.5z M181 517h6.5l-6.5 6.5z M245 517h6.5l-6.5 6.5z M437 517h6.5l-6.5 6.5z M501 517h6.5l-6.5 6.5z M565 517h6.5l-6.5 6.5z M629 517h6.5l-6.5 6.5z M693 517h6.5l-6.5 6.5z M757 517h6.5l-6.5 6.5z M117 537h6.5l-6.5 6.5z M181 537h6.5l-6.5 6.5z M245 537h6.5l-6.5 6.5z M565 537h6.5l-6.5 6.5z M629 537h6.5l-6.5 6.5z M693 537h6.5l-6.5 6.5z M757 537h6.5l-6.5 6.5z M117 557h6.5l-6.5 6.5z M181 557h6.5l-6.5 6.5z M245 557h6.5l-6.5 6.5z M309 557h6.5l-6.5 6.5z M373 557h6.5l-6.5 6.5z M437 557h6.5l-6.5 6.5z M501 557h6.5l-6.5 6.5z M565 557h6.5l-6.5 6.5z M629 557h6.5l-6.5 6.5z M693 557h6.5l-6.5 6.5z M757 557h6.5l-6.5 6.5z M117 576h6.5l-6.5 6.5z M181 576h6.5l-6.5 6.5z M245 576h6.5l-6.5 6.5z M565 576h6.5l-6.5 6.5z M629 576h6.5l-6.5 6.5z M693 576h6.5l-6.5 6.5z M757 576h6.5l-6.5 6.5z M117 596h6.5l-6.5 6.5z M181 596h6.5l-6.5 6.5z M245 596h6.5l-6.5 6.5z M309 596h6.5l-6.5 6.5z M373 596h6.5l-6.5 6.5z M437 596h6.5l-6.5 6.5z M501 596h6.5l-6.5 6.5z M565 596h6.5l-6.5 6.5z M629 596h6.5l-6.5 6.5z M693 596h6.5l-6.5 6.5z M757 596h6.5l-6.5 6.5z M117 616h6.5l-6.5 6.5z M117 636h6.5l-6.5 6.5z M117 656h6.5l-6.5 6.5z" fill="#107c10"/></svg>
<div style="left:2px;top:672px;width:1281px;height:27px;background:#e6e6e6;"></div>
<div style="left:1265px;top:222px;width:15px;height:436px;background:#d6d6d6;"></div>
<div style="left:1265px;top:207px;width:15px;height:15px;background:#fff;border:1px solid #ababab;box-sizing:border-box;"></div>
<div style="left:1265px;top:222px;width:15px;height:175px;background:#fff;border:1px solid #ababab;box-sizing:border-box;"></div>
<div style="left:1265px;top:657px;width:15px;height:15px;background:#fff;border:1px solid #ababab;box-sizing:border-box;"></div>
<svg style="left:1269px;top:212.5px" width="7" height="4"><path d="M0 4 L3.5 0 L7 4Z" fill="#777"/></svg>
<svg style="left:1269px;top:662.5px" width="7" height="4"><path d="M0 0 L3.5 4 L7 0Z" fill="#777"/></svg>
<div style="left:802px;top:678px;width:446px;height:15px;background:#d6d6d6;"></div>
<div style="left:787px;top:678px;width:15px;height:15px;background:#fff;border:1px solid #ababab;box-sizing:border-box;"></div>
<div style="left:802px;top:678px;width:420px;height:15px;background:#fff;border:1px solid #ababab;box-sizing:border-box;"></div>
<div style="left:1249px;top:678px;width:15px;height:15px;background:#fff;border:1px solid #ababab;box-sizing:border-box;"></div>
<svg style="left:792.5px;top:682px" width="4" height="7"><path d="M4 0 L0 3.5 L4 7Z" fill="#777"/></svg>
<svg style="left:1254.5px;top:682px" width="4" height="7"><path d="M0 0 L4 3.5 L0 7Z" fill="#777"/></svg>
<div style="left:770px;top:681px;width:2px;height:2px;background:#b0b0b0;"></div>
<div style="left:770px;top:685px;width:2px;height:2px;background:#b0b0b0;"></div>
<div style="left:770px;top:689px;width:2px;height:2px;background:#b0b0b0;"></div>
<div style="left:102px;top:671px;width:55px;height:24px;background:#fff;"></div>
<div style="left:102px;top:694px;width:55px;height:2px;background:#217346;"></div>
<div style="left:102px;top:671px;width:1px;height:23px;background:#ababab;"></div>
<div style="left:156px;top:671px;width:1px;height:23px;background:#ababab;"></div>
<span class="t b" style="left:102px;top:677.6px;width:55px;text-align:center;font-size:13.2px;color:#217346;">Toán</span>
<svg style="left:28px;top:680px" width="6" height="9"><path d="M5 0 L0 4.5 L5 9Z" fill="#c6c6c6"/></svg>
<svg style="left:57px;top:680px" width="6" height="9"><path d="M0 0 L5 4.5 L0 9Z" fill="#c6c6c6"/></svg>
<svg style="left:189px;top:676px" width="18" height="18" viewBox="0 0 18 18"><circle cx="9" cy="9" r="7.6" fill="none" stroke="#767676" stroke-width="1.4"/><path d="M9 5v8M5 9h8" stroke="#767676" stroke-width="1.8"/></svg>
<!-- chrome -->
<svg style="left:24px;top:12px" width="14" height="14" viewBox="0 0 14 14"><rect x="0" y="0" width="14" height="14" rx="1" fill="#fff"/><path d="M2.1 1.2H11.8V5.6L10.8 6.6H3.1L2.1 5.6Z" fill="#217346"/><rect x="3" y="9.1" width="7.9" height="3.8" fill="#217346"/><rect x="5" y="10.6" width="2.1" height="2.4" fill="#fff"/></svg>
<svg style="left:52px;top:11px" width="17" height="15" viewBox="0 0 17 15"><path d="M5.9 1.9 L2 5.6 L5.9 9.3 M2.2 5.6 H9.5 C12.6 5.6 14.2 7.5 14.2 9.6 C14.2 11.8 12.6 13.4 10 13.4 H9" fill="none" stroke="#6ea487" stroke-width="2.2" stroke-linecap="round" stroke-linejoin="round"/></svg>
<svg style="left:73px;top:17px" width="6" height="3.5" viewBox="0 0 6 3.5"><path d="M0 0H6L3 3.5Z" fill="#6ea487"/></svg>
<svg style="left:87px;top:11px" width="17" height="15" viewBox="0 0 17 15"><path d="M11.1 1.9 L15 5.6 L11.1 9.3 M14.8 5.6 H7.5 C4.4 5.6 2.8 7.5 2.8 9.6 C2.8 11.8 4.4 13.4 7 13.4 H8" fill="none" stroke="#6ea487" stroke-width="2.2" stroke-linecap="round" stroke-linejoin="round"/></svg>
<svg style="left:108px;top:17px" width="6" height="3.5" viewBox="0 0 6 3.5"><path d="M0 0H6L3 3.5Z" fill="#6ea487"/></svg>
<svg style="left:127px;top:16px" width="6" height="7" viewBox="0 0 6 7"><rect x="0" y="0" width="6" height="1.2" fill="#fff"/><path d="M0 3.2H6L3 6.4Z" fill="#fff"/></svg>
<span class="t" style="left:472.1px;top:13.0px;font-size:12px;color:#fff;transform:scaleX(0.9966);transform-origin:0 0;">Thống kê chất lượng giáo dục (1)  [Compatibility Mode]  -  Excel</span>
<span class="t" style="left:930.93px;top:13.0px;font-size:12px;color:#fff;transform:scaleX(0.9555);transform-origin:0 0;">PHUONG1 TRINH THI THANH</span>
<svg style="left:1115px;top:12px" width="13" height="10" viewBox="0 0 13 10"><rect x="0.5" y="0.5" width="12" height="9" fill="none" stroke="#fff"/><path d="M0.5 2.7H12.5" stroke="#fff" stroke-width="0.9"/><path d="M6.5 9V4 M4.2 6.2 L6.5 3.9 L8.8 6.2" fill="none" stroke="#fff" stroke-width="1"/></svg>
<div style="left:1163px;top:17px;width:10px;height:1px;background:#fff;"></div>
<div style="left:1209px;top:12px;width:8px;height:8px;border:1px solid #fff;"></div>
<svg style="left:1255px;top:12px" width="11" height="11" viewBox="0 0 11 11"><path d="M0.5 0.5 L10.3 10.3 M10.3 0.5 L0.5 10.3" stroke="#fff" stroke-width="1.1"/></svg>
<span class="t" style="left:21.7px;top:44.85px;font-size:12.3px;color:#fff;transform:scaleX(0.9678);transform-origin:0 0;">File</span>
<span class="t" style="left:134.71px;top:44.85px;font-size:12.3px;color:#fff;transform:scaleX(0.9649);transform-origin:0 0;">Insert</span>
<span class="t" style="left:190.71px;top:44.85px;font-size:12.3px;color:#fff;transform:scaleX(0.9538);transform-origin:0 0;">Page Layout</span>
<span class="t" style="left:282.8px;top:44.85px;font-size:12.3px;color:#fff;transform:scaleX(0.9696);transform-origin:0 0;">Formulas</span>
<span class="t" style="left:358.82px;top:44.85px;font-size:12.3px;color:#fff;transform:scaleX(0.9412);transform-origin:0 0;">Data</span>
<span class="t" style="left:409.62px;top:44.85px;font-size:12.3px;color:#fff;transform:scaleX(0.9412);transform-origin:0 0;">Review</span>
<span class="t" style="left:473.6px;top:44.85px;font-size:12.3px;color:#fff;transform:scaleX(0.9680);transform-origin:0 0;">View</span>
<span class="t" style="left:525.36px;top:44.85px;font-size:12.3px;color:#fff;transform:scaleX(1.0353);transform-origin:0 0;">Add-ins</span>
<span class="t" style="left:594.78px;top:44.85px;font-size:12.3px;color:#fff;transform:scaleX(1.0138);transform-origin:0 0;">Help</span>
<span class="t" style="left:646.72px;top:44.85px;font-size:12.3px;color:#fff;transform:scaleX(0.9429);transform-origin:0 0;">Team</span>
<span class="t" style="left:74.56px;top:44.85px;font-size:12.3px;color:#217346;transform:scaleX(1.0354);transform-origin:0 0;">Home</span>
<svg style="left:702px;top:42px" width="13" height="16" viewBox="0 0 13 16"><path d="M6.5 0.7 C3.4 0.7 1.3 3 1.3 5.6 C1.3 7.4 2.3 8.5 3.2 9.6 C3.8 10.3 4 10.9 4 11.8 H9 C9 10.9 9.2 10.3 9.8 9.6 C10.7 8.5 11.7 7.4 11.7 5.6 C11.7 3 9.6 0.7 6.5 0.7Z" fill="none" stroke="#fff" stroke-width="1.1"/><path d="M4.2 13.4H8.8M5 15.2H8" stroke="#fff" stroke-width="1.1"/></svg>
<span class="t" style="left:720.09px;top:44.85px;font-size:12.3px;color:#fff;transform:scaleX(0.9899);transform-origin:0 0;">Tell me what you want to do</span>
<svg style="left:1210px;top:42px" width="18" height="18" viewBox="0 0 18 18"><circle cx="7.6" cy="5.6" r="4.2" fill="none" stroke="#fff" stroke-width="1.1"/><path d="M1 16.4 C1.4 12.6 3.8 10.6 6.6 10.4" fill="none" stroke="#fff" stroke-width="1.1"/><path d="M12.2 9.6 V16.6 M8.7 13.1 H15.7" stroke="#fff" stroke-width="1.2"/></svg>
<span class="t" style="left:1230.03px;top:44.85px;font-size:12.3px;color:#fff;transform:scaleX(0.9241);transform-origin:0 0;">Share</span>
<div style="left:7px;top:169px;width:102px;height:26px;background:#fff;border:1px solid #c6c6c6;box-sizing:border-box;"></div>
<span class="t" style="left:13.71px;top:175.9px;font-size:13.2px;color:#262626;transform:scaleX(1.0391);transform-origin:0 0;">A1</span>
<svg style="left:95px;top:179px" width="8" height="4" viewBox="0 0 8 4"><path d="M0 0H7L3.5 4Z" fill="#777"/></svg>
<div style="left:123px;top:177px;width:2px;height:2px;background:#a6a6a6;"></div>
<div style="left:123px;top:181px;width:2px;height:2px;background:#a6a6a6;"></div>
<div style="left:123px;top:185px;width:2px;height:2px;background:#a6a6a6;"></div>
<div style="left:139px;top:169px;width:110px;height:26px;background:#fff;border:1px solid #c6c6c6;box-sizing:border-box;"></div>
<svg style="left:152px;top:176px" width="12" height="12" viewBox="0 0 12 12"><path d="M1.2 1.2 L10.8 10.8 M10.8 1.2 L1.2 10.8" stroke="#bdbdbd" stroke-width="1.9"/></svg>
<svg style="left:187px;top:176px" width="14" height="12" viewBox="0 0 14 12"><path d="M1.2 6.6 L5 10.4 L12.8 1.6" fill="none" stroke="#bdbdbd" stroke-width="2.1"/></svg>
<span class="t s b" style="left:224.5px;top:173.5px;font-size:15px;font-style:italic;color:#555;letter-spacing:-0.5px;">f<span style="position:static;font-size:11px;">x</span></span>
<div style="left:252px;top:169px;width:1026px;height:26px;background:#fff;border:1px solid #c6c6c6;box-sizing:border-box;"></div>
<span class="t" style="left:263.68px;top:175.9px;font-size:13.2px;color:#262626;transform:scaleX(0.9398);transform-origin:0 0;">PHÒNG GD&amp;ĐT HUYỆN TIỀN HẢI</span>
<svg style="left:1265px;top:179px" width="9" height="7" viewBox="0 0 9 7"><path d="M1 1.2 L4.5 4.8 L8 1.2" fill="none" stroke="#777" stroke-width="2.1"/></svg>
<span class="t" style="left:8.95px;top:704.0px;font-size:12px;color:#262626;transform:scaleX(0.9168);transform-origin:0 0;">Ready</span>
<div style="left:986px;top:700px;width:38px;height:21px;background:#c6c6c6;"></div>
<svg style="left:998px;top:704px" width="13" height="12" viewBox="0 0 13 12"><path d="M0.5 0.5H12.5V11.5H0.5Z M4.5 0.5V11.5 M8.5 0.5V11.5 M0.5 4.2H12.5 M0.5 7.8H12.5" fill="none" stroke="#6a6a6a" stroke-width="1"/></svg>
<svg style="left:1036px;top:704px" width="14" height="12" viewBox="0 0 14 12"><rect x="0.5" y="0.5" width="13" height="11" fill="none" stroke="#6a6a6a"/><rect x="3.5" y="2.5" width="7" height="7" fill="none" stroke="#6a6a6a"/><path d="M5 4.5H9M5 6H9M5 7.5H9" stroke="#6a6a6a" stroke-width="0.8"/></svg>
<svg style="left:1074px;top:704px" width="14" height="12" viewBox="0 0 14 12"><rect x="0.5" y="0.5" width="13" height="11" fill="none" stroke="#6a6a6a"/><path d="M4.5 0.5V6.5H9.5V0.5 M0.5 6.5H4.5" fill="none" stroke="#6a6a6a"/></svg>
<div style="left:1105px;top:709px;width:6px;height:2px;background:#5a5a5a;"></div>
<div style="left:1115px;top:710px;width:100px;height:1px;background:#a0a0a0;"></div>
<div style="left:1163px;top:704px;width:5px;height:11px;background:#6a6a6a;"></div>
<div style="left:1218px;top:709px;width:8px;height:2px;background:#5a5a5a;"></div>
<div style="left:1221px;top:706px;width:2px;height:8px;background:#5a5a5a;"></div>
<span class="t" style="left:1237.17px;top:704.0px;font-size:12px;color:#262626;transform:scaleX(0.8847);transform-origin:0 0;">100%</span>
<!-- ribbon -->
<div style="left:87px;top:70px;width:1px;height:84px;background:#d4d4d4;"></div>
<div style="left:294px;top:70px;width:1px;height:84px;background:#d4d4d4;"></div>
<div style="left:558px;top:70px;width:1px;height:84px;background:#d4d4d4;"></div>
<div style="left:698px;top:70px;width:1px;height:84px;background:#d4d4d4;"></div>
<div style="left:879px;top:70px;width:1px;height:84px;background:#d4d4d4;"></div>
<div style="left:1015px;top:70px;width:1px;height:84px;background:#d4d4d4;"></div>
<div style="left:1202px;top:70px;width:1px;height:84px;background:#d4d4d4;"></div>
<span class="t" style="left:11.1px;top:144.0px;font-size:12px;color:#444;transform:scaleX(0.9925);transform-origin:0 0;">Clipboard</span>
<span class="t" style="left:170.58px;top:144.0px;font-size:12px;color:#444;transform:scaleX(1.0256);transform-origin:0 0;">Font</span>
<span class="t" style="left:391.6px;top:144.0px;font-size:12px;color:#444;transform:scaleX(1.0081);transform-origin:0 0;">Alignment</span>
<span class="t" style="left:600.02px;top:144.0px;font-size:12px;color:#444;transform:scaleX(0.9666);transform-origin:0 0;">Number</span>
<span class="t" style="left:773.97px;top:144.0px;font-size:12px;color:#444;transform:scaleX(0.8861);transform-origin:0 0;">Styles</span>
<span class="t" style="left:935.16px;top:144.0px;font-size:12px;color:#444;transform:scaleX(0.9030);transform-origin:0 0;">Cells</span>
<span class="t" style="left:1089.89px;top:144.0px;font-size:12px;color:#444;transform:scaleX(1.0168);transform-origin:0 0;">Editing</span>
<svg style="left:76px;top:147px" width="7" height="7" viewBox="0 0 7 7"><path d="M0.5 6.5V0.5H6.5" fill="none" stroke="#777"/><path d="M2.6 2.6L6 6M6.4 3V6.4H3" fill="none" stroke="#777" stroke-width="1"/></svg>
<svg style="left:283px;top:147px" width="7" height="7" viewBox="0 0 7 7"><path d="M0.5 6.5V0.5H6.5" fill="none" stroke="#777"/><path d="M2.6 2.6L6 6M6.4 3V6.4H3" fill="none" stroke="#777" stroke-width="1"/></svg>
<svg style="left:547px;top:147px" width="7" height="7" viewBox="0 0 7 7"><path d="M0.5 6.5V0.5H6.5" fill="none" stroke="#777"/><path d="M2.6 2.6L6 6M6.4 3V6.4H3" fill="none" stroke="#777" stroke-width="1"/></svg>
<svg style="left:687px;top:147px" width="7" height="7" viewBox="0 0 7 7"><path d="M0.5 6.5V0.5H6.5" fill="none" stroke="#777"/><path d="M2.6 2.6L6 6M6.4 3V6.4H3" fill="none" stroke="#777" stroke-width="1"/></svg>
<svg style="left:1263px;top:146px" width="10" height="7" viewBox="0 0 10 7"><path d="M1 6 L5 2 L9 6" fill="none" stroke="#777" stroke-width="1.9"/></svg>
<svg style="left:14px;top:73px" width="30" height="32" viewBox="0 0 30 32"><rect x="1" y="4" width="24" height="25" rx="1.6" fill="#eac282"/><rect x="10" y="1.2" width="6" height="4" rx="1" fill="#777"/><rect x="6" y="4" width="14" height="3.8" rx="0.6" fill="#777"/><circle cx="13" cy="3.6" r="1" fill="#f3f3f3"/><path d="M15.5 12.5 H24 L28.5 17 V30.5 H15.5Z" fill="#fff" stroke="#777" stroke-width="1"/><path d="M24 12.5 V17 H28.5" fill="none" stroke="#777" stroke-width="1"/></svg>
<span class="t" style="left:13.25px;top:109.0px;font-size:12px;color:#262626;transform:scaleX(0.9190);transform-origin:0 0;">Paste</span>
<svg style="left:23.75px;top:128.9px" width="5.5" height="3.2" viewBox="0 0 5.5 3.2"><path d="M0 0H5.5L2.75 3.2Z" fill="#6a6a6a"/></svg>
<svg style="left:51px;top:71px" width="17" height="17" viewBox="0 0 17 17"><path d="M4 1.5 L11.5 10.5 M13 1.5 L5.5 10.5" stroke="#666" stroke-width="1.7" stroke-linecap="round"/><circle cx="4" cy="13" r="2.5" fill="none" stroke="#3e7fc6" stroke-width="1.2"/><circle cx="12.6" cy="13" r="2.5" fill="none" stroke="#3e7fc6" stroke-width="1.2"/></svg>
<svg style="left:50px;top:95px" width="17" height="16" viewBox="0 0 17 16"><path d="M1.5 1.5 H5.8 L8 3.7 V11.5 H1.5Z" fill="#fff" stroke="#777"/><path d="M3 5H6.4M3 7H6.4M3 9H6.4" stroke="#3e7fc6" stroke-width="0.9"/><path d="M7.5 4.5 H12.6 L15.5 7.4 V14.5 H7.5Z" fill="#fff" stroke="#777"/><path d="M12.6 4.5V7.4H15.5" fill="none" stroke="#777" stroke-width="0.8"/><path d="M9.2 9H13.8M9.2 10.8H13.8M9.2 12.6H13.8" stroke="#3e7fc6" stroke-width="0.9"/></svg>
<svg style="left:72.85px;top:101.9px" width="5.5" height="3.2" viewBox="0 0 5.5 3.2"><path d="M0 0H5.5L2.75 3.2Z" fill="#6a6a6a"/></svg>
<svg style="left:50px;top:118px" width="18" height="16" viewBox="0 0 18 16"><path d="M1 7.4 L6.9 5.2 L12.6 9.8 L7.8 14.8Z" fill="#eac282"/><path d="M7.2 4.2 L10.6 1.4 L14.6 6 L11.8 9.2Z" fill="#777"/><path d="M12.4 2.6 L15 0.6 L17 2.8 L14.6 5Z" fill="#777"/></svg>
<div style="left:92px;top:77px;width:111px;height:23px;background:#fff;border:1px solid #c6c6c6;box-sizing:border-box;"></div>
<div style="left:203px;top:77px;width:43px;height:23px;background:#fff;border:1px solid #c6c6c6;box-sizing:border-box;"></div>
<span class="t" style="left:94.71px;top:82.75px;font-size:12.5px;color:#262626;transform:scaleX(0.9374);transform-origin:0 0;">Times New Roma</span>
<svg style="left:192.75px;top:86.9px" width="5.5" height="3.2" viewBox="0 0 5.5 3.2"><path d="M0 0H5.5L2.75 3.2Z" fill="#6a6a6a"/></svg>
<span class="t" style="left:206.26px;top:82.75px;font-size:12.5px;color:#262626;transform:scaleX(0.8692);transform-origin:0 0;">11</span>
<svg style="left:235.65px;top:86.9px" width="5.5" height="3.2" viewBox="0 0 5.5 3.2"><path d="M0 0H5.5L2.75 3.2Z" fill="#6a6a6a"/></svg>
<span class="t" style="left:252.2px;top:81.0px;font-size:15px;color:#505050;">A</span>
<svg style="left:260.5px;top:80.5px" width="5" height="3" viewBox="0 0 5 3"><path d="M0 3H5L2.5 0Z" fill="#3e7fc6"/></svg>
<span class="t" style="left:275px;top:84.0px;font-size:12px;color:#505050;">A</span>
<svg style="left:282.5px;top:81px" width="5" height="3" viewBox="0 0 5 3"><path d="M0 0H5L2.5 3Z" fill="#3e7fc6"/></svg>
<div style="left:92px;top:108px;width:22px;height:23px;background:#c6c6c6;"></div>
<span class="t b" style="left:98.6px;top:112.0px;font-size:13px;color:#444;">B</span>
<span class="t s b" style="left:121.6px;top:110.6px;font-size:14.5px;font-style:italic;color:#444;">I</span>
<span class="t b" style="left:142.2px;top:112.75px;font-size:12.5px;color:#444;transform:scaleX(0.95);transform-origin:0 0;">U</span>
<div style="left:142px;top:124px;width:9px;height:1px;background:#444;"></div>
<svg style="left:160.65px;top:117.9px" width="5.5" height="3.2" viewBox="0 0 5.5 3.2"><path d="M0 0H5.5L2.75 3.2Z" fill="#6a6a6a"/></svg>
<div style="left:174px;top:109px;width:1px;height:21px;background:#d4d4d4;"></div>
<svg style="left:183px;top:112px" width="14" height="14" viewBox="0 0 14 14"><path d="M0 0h1v1h-1zM6 0h1v1h-1zM12 0h1v1h-1zM0 0h1v1h-1zM0 6h1v1h-1zM0 2h1v1h-1zM6 2h1v1h-1zM12 2h1v1h-1zM2 0h1v1h-1zM2 6h1v1h-1zM0 4h1v1h-1zM6 4h1v1h-1zM12 4h1v1h-1zM4 0h1v1h-1zM4 6h1v1h-1zM0 6h1v1h-1zM6 6h1v1h-1zM12 6h1v1h-1zM6 0h1v1h-1zM6 6h1v1h-1zM0 8h1v1h-1zM6 8h1v1h-1zM12 8h1v1h-1zM8 0h1v1h-1zM8 6h1v1h-1zM0 10h1v1h-1zM6 10h1v1h-1zM12 10h1v1h-1zM10 0h1v1h-1zM10 6h1v1h-1zM12 0h1v1h-1zM12 6h1v1h-1z" fill="#666"/><rect x="0" y="12" width="13" height="1" fill="#555"/></svg>
<svg style="left:203.75px;top:117.9px" width="5.5" height="3.2" viewBox="0 0 5.5 3.2"><path d="M0 0H5.5L2.75 3.2Z" fill="#6a6a6a"/></svg>
<div style="left:217px;top:109px;width:1px;height:21px;background:#d4d4d4;"></div>
<svg style="left:224px;top:110px" width="18" height="17" viewBox="0 0 18 17"><path d="M8.6 3.3 L14 8.6 L8.6 13 L3.4 8.6Z" fill="#fff" stroke="#555" stroke-width="1"/><path d="M7 6 V1.4 H9.8 V5" fill="none" stroke="#555" stroke-width="1"/><path d="M14.2 5.6 C16.6 7.2 17 9.8 15.2 12 C15.4 9.6 15 8.2 13.6 7Z" fill="#3e7fc6"/><rect x="1" y="13" width="16" height="3.8" fill="#ffff00"/></svg>
<svg style="left:246.75px;top:117.9px" width="5.5" height="3.2" viewBox="0 0 5.5 3.2"><path d="M0 0H5.5L2.75 3.2Z" fill="#6a6a6a"/></svg>
<span class="t" style="left:262.2px;top:110.8px;font-size:14px;color:#505050;">A</span>
<div style="left:259px;top:123px;width:16px;height:4px;background:#ff0000;"></div>
<svg style="left:280.75px;top:117.9px" width="5.5" height="3.2" viewBox="0 0 5.5 3.2"><path d="M0 0H5.5L2.75 3.2Z" fill="#6a6a6a"/></svg>
<div style="left:321px;top:77px;width:22px;height:23px;background:#c6c6c6;"></div>
<div style="left:303px;top:80px;width:14px;height:1px;background:#737373;"></div><div style="left:304px;top:83px;width:12px;height:1px;background:#737373;"></div><div style="left:303px;top:86px;width:14px;height:1px;background:#737373;"></div>
<div style="left:325px;top:84px;width:14px;height:1px;background:#737373;"></div><div style="left:326px;top:87px;width:12px;height:1px;background:#737373;"></div><div style="left:325px;top:90px;width:14px;height:1px;background:#737373;"></div>
<div style="left:347px;top:89px;width:14px;height:1px;background:#737373;"></div><div style="left:348px;top:92px;width:12px;height:1px;background:#737373;"></div><div style="left:347px;top:95px;width:14px;height:1px;background:#737373;"></div>
<div style="left:321px;top:108px;width:22px;height:23px;background:#c6c6c6;"></div>
<div style="left:303px;top:114px;width:14px;height:1px;background:#737373;"></div><div style="left:303px;top:117px;width:10px;height:1px;background:#737373;"></div><div style="left:303px;top:120px;width:14px;height:1px;background:#737373;"></div><div style="left:303px;top:123px;width:10px;height:1px;background:#737373;"></div>
<div style="left:325px;top:114px;width:14px;height:1px;background:#737373;"></div><div style="left:327px;top:117px;width:10px;height:1px;background:#737373;"></div><div style="left:325px;top:120px;width:14px;height:1px;background:#737373;"></div><div style="left:327px;top:123px;width:10px;height:1px;background:#737373;"></div>
<div style="left:347px;top:114px;width:14px;height:1px;background:#737373;"></div><div style="left:351px;top:117px;width:10px;height:1px;background:#737373;"></div><div style="left:347px;top:120px;width:14px;height:1px;background:#737373;"></div><div style="left:351px;top:123px;width:10px;height:1px;background:#737373;"></div>
<div style="left:369px;top:78px;width:1px;height:21px;background:#d4d4d4;"></div>
<div style="left:369px;top:109px;width:1px;height:21px;background:#d4d4d4;"></div>
<span class="t" style="left:376.2px;top:80.2px;width:12.4px;font-size:11px;color:#555;-webkit-text-stroke:0.3px #555;transform:rotate(-45deg);transform-origin:50% 50%;letter-spacing:-0.1px;">ab</span>
<svg style="left:380px;top:82px" width="15" height="14" viewBox="0 0 15 14"><path d="M3.4 12.2 L11.6 4" fill="none" stroke="#5a5a5a" stroke-width="1.3"/><path d="M13 2.6 L12.4 7 L8.6 3.2Z" fill="#5a5a5a"/></svg>
<svg style="left:396.65px;top:86.9px" width="5.5" height="3.2" viewBox="0 0 5.5 3.2"><path d="M0 0H5.5L2.75 3.2Z" fill="#6a6a6a"/></svg>
<svg style="left:377px;top:112px" width="17" height="13" viewBox="0 0 17 13"><path shape-rendering="crispEdges" d="M0 0.5H16 M8 3.5H16 M8 6.5H16 M8 9.5H16 M0 12.5H16" stroke="#6a6a6a" stroke-width="1"/><path d="M7 6.5H1.4 M4 3.4 L0.9 6.5 L4 9.6" fill="none" stroke="#3e7fc6" stroke-width="2"/></svg>
<svg style="left:399px;top:112px" width="17" height="13" viewBox="0 0 17 13"><path shape-rendering="crispEdges" d="M0 0.5H16 M8 3.5H16 M8 6.5H16 M8 9.5H16 M0 12.5H16" stroke="#6a6a6a" stroke-width="1"/><path d="M0 6.5H5.6 M3 3.4 L6.1 6.5 L3 9.6" fill="none" stroke="#3e7fc6" stroke-width="2"/></svg>
<div style="left:422px;top:76px;width:1px;height:55px;background:#d4d4d4;"></div>
<div style="left:427px;top:77px;width:81px;height:23px;background:#c6c6c6;"></div>
<span class="t" style="left:431.6px;top:78.8px;font-size:10.8px;color:#555;letter-spacing:-0.2px;">ab</span>
<span class="t" style="left:431.8px;top:86.2px;font-size:10.8px;color:#555;">c</span>
<svg style="left:438px;top:89px" width="7" height="6" viewBox="0 0 7 6"><path d="M5.4 0.6V3.4H1.4 M3.2 1.4 L1.2 3.4 L3.2 5.4" fill="none" stroke="#3e7fc6" stroke-width="1.2"/></svg>
<span class="t" style="left:448.41px;top:82.75px;font-size:12.5px;color:#262626;transform:scaleX(0.9512);transform-origin:0 0;">Wrap Text</span>
<div style="left:427px;top:108px;width:127px;height:23px;background:#c6c6c6;"></div>
<svg style="left:430px;top:111px" width="16" height="16" viewBox="0 0 16 16"><rect x="0.5" y="0.5" width="14" height="14" fill="#fff" stroke="#6a6a6a" stroke-width="1.2"/><path shape-rendering="crispEdges" d="M0.5 3.5H14.5 M0.5 11.5H14.5 M7.5 0.5V3.5 M7.5 11.5V14.5" stroke="#6a6a6a" stroke-width="1"/><path d="M2.6 7.5H12.4 M4.4 5.8 L2.6 7.5 L4.4 9.2 M10.6 5.8 L12.4 7.5 L10.6 9.2" fill="none" stroke="#3e7fc6" stroke-width="1.1"/></svg>
<span class="t" style="left:448.89px;top:113.75px;font-size:12.5px;color:#262626;transform:scaleX(0.9714);transform-origin:0 0;">Merge &amp; Center</span>
<svg style="left:543.55px;top:117.9px" width="5.5" height="3.2" viewBox="0 0 5.5 3.2"><path d="M0 0H5.5L2.75 3.2Z" fill="#6a6a6a"/></svg>
<div style="left:563px;top:77px;width:131px;height:23px;background:#fff;border:1px solid #c6c6c6;box-sizing:border-box;"></div>
<span class="t" style="left:566.14px;top:82.75px;font-size:12.5px;color:#262626;transform:scaleX(0.8997);transform-origin:0 0;">General</span>
<svg style="left:683.75px;top:86.9px" width="5.5" height="3.2" viewBox="0 0 5.5 3.2"><path d="M0 0H5.5L2.75 3.2Z" fill="#6a6a6a"/></svg>
<span class="t" style="left:571px;top:111.4px;font-size:15px;color:#5a5a5a;">$</span>
<svg style="left:587.75px;top:117.9px" width="5.5" height="3.2" viewBox="0 0 5.5 3.2"><path d="M0 0H5.5L2.75 3.2Z" fill="#6a6a6a"/></svg>
<span class="t" style="left:602px;top:111.75px;font-size:14.5px;color:#5a5a5a;">%</span>
<span class="t s b" style="left:626.6px;top:103.2px;font-size:19px;color:#5a5a5a;">,</span>
<div style="left:645px;top:109px;width:1px;height:21px;background:#d4d4d4;"></div>
<span class="t" style="left:660.5px;top:110.6px;font-size:8.6px;color:#555;letter-spacing:-0.2px;">.0</span>
<span class="t" style="left:655.5px;top:117.8px;font-size:8.6px;color:#555;letter-spacing:-0.2px;">.00</span>
<svg style="left:653px;top:111px" width="8" height="7" viewBox="0 0 8 7"><path d="M7.4 3.4H1.2 M3.8 0.8 L1.2 3.4 L3.8 6" fill="none" stroke="#3e7fc6" stroke-width="1.2"/></svg>
<span class="t" style="left:677px;top:110.6px;font-size:8.6px;color:#555;letter-spacing:-0.2px;">.00</span>
<span class="t" style="left:682px;top:117.8px;font-size:8.6px;color:#555;letter-spacing:-0.2px;">.0</span>
<svg style="left:674.5px;top:118px" width="8" height="7" viewBox="0 0 8 7"><path d="M0.4 3.4H6.6 M4 0.8 L6.6 3.4 L4 6" fill="none" stroke="#3e7fc6" stroke-width="1.2"/></svg>
<svg style="left:724px;top:73px" width="32" height="32" viewBox="0 0 32 32"><rect x="1" y="1" width="28" height="25" fill="#fff"/><rect x="9" y="2" width="6" height="5" fill="#d9603b"/><rect x="9" y="8" width="11" height="5" fill="#4a86c5"/><rect x="9" y="14" width="9" height="5" fill="#d9603b"/><rect x="9" y="20" width="4" height="5" fill="#4a86c5"/><path shape-rendering="crispEdges" d="M1.5 1.5H28.5V25.5H1.5Z M8.5 1.5V25.5 M21.5 1.5V25.5 M1.5 7.5H28.5 M1.5 13.5H28.5 M1.5 19.5H28.5" fill="none" stroke="#8a8a8a" stroke-width="1"/><rect shape-rendering="crispEdges" x="15.5" y="18.5" width="15" height="12" fill="#fff" stroke="#777"/><path d="M19.6 23.1H27 M19.6 26.1H27 M25.4 20.8 L21.2 28.4" stroke="#444" stroke-width="1.1"/></svg>
<span class="t" style="left:708.08px;top:109.0px;font-size:12px;color:#262626;transform:scaleX(1.0366);transform-origin:0 0;">Conditional</span>
<span class="t" style="left:704.99px;top:125.0px;font-size:12px;color:#262626;transform:scaleX(1.0221);transform-origin:0 0;">Formatting</span>
<svg style="left:766.95px;top:128.9px" width="5.5" height="3.2" viewBox="0 0 5.5 3.2"><path d="M0 0H5.5L2.75 3.2Z" fill="#6a6a6a"/></svg>
<svg style="left:789px;top:75px" width="32" height="30" viewBox="0 0 32 30"><rect x="1" y="1" width="25" height="21" fill="#fff"/><rect x="8" y="7" width="18" height="15" fill="#bdd3ea"/><path shape-rendering="crispEdges" d="M1.5 1.5H25.5V21.5H1.5Z M7.5 1.5V21.5 M13.5 1.5V21.5 M19.5 1.5V21.5 M1.5 6.5H25.5 M1.5 11.5H25.5 M1.5 16.5H25.5" fill="none" stroke="#8a8a8a" stroke-width="1"/><path d="M30.4 6.4 L30.4 12.2 L23 21.4 L20.2 19Z" fill="#777"/><path d="M25.2 13 L27.6 15" stroke="#f3f3f3" stroke-width="1.1"/><path d="M19.6 19.4 C22.2 19.4 23.6 21.6 22.6 24.2 C21.6 27 19 28.6 7.6 28.6 C12 26 13.6 24.4 15 22 C16 20.4 17.8 19.4 19.6 19.4Z" fill="#3e7fc6"/><path d="M18.4 21.4 C20.4 21 21.6 22.4 21 24.2 C20.4 23 19.6 22.4 18.4 22.6Z" fill="#e4eefa"/></svg>
<span class="t" style="left:776.92px;top:109.0px;font-size:12px;color:#262626;transform:scaleX(0.9656);transform-origin:0 0;">Format as</span>
<span class="t" style="left:786.23px;top:125.0px;font-size:12px;color:#262626;transform:scaleX(0.9532);transform-origin:0 0;">Table</span>
<svg style="left:815.65px;top:128.9px" width="5.5" height="3.2" viewBox="0 0 5.5 3.2"><path d="M0 0H5.5L2.75 3.2Z" fill="#6a6a6a"/></svg>
<svg style="left:839px;top:73px" width="32" height="30" viewBox="0 0 32 30"><rect x="1" y="1" width="26" height="22" fill="#fff"/><rect x="7" y="7" width="14" height="10" fill="#bdd3ea"/><path shape-rendering="crispEdges" d="M1.5 1.5H26.5V22.5H1.5Z M6.5 1.5V22.5 M20.5 1.5V22.5 M1.5 6.5H26.5 M1.5 16.5H26.5" fill="none" stroke="#8a8a8a" stroke-width="1"/><path d="M30 6.6 L30 12.4 L22.8 20.4 L20 18Z" fill="#777"/><path d="M25 12.4 L27.4 14.4" stroke="#f3f3f3" stroke-width="1.1"/><path d="M19.4 18.4 C22 18.4 23.4 20.6 22.4 23.2 C21.4 25.8 19 27.6 8 27.6 C12.4 25 13.6 23.4 15 21 C16 19.4 17.6 18.4 19.4 18.4Z" fill="#3e7fc6"/><path d="M18.2 20.4 C20.2 20 21.4 21.4 20.8 23.2 C20.2 22 19.4 21.4 18.2 21.6Z" fill="#e4eefa"/></svg>
<span class="t" style="left:842.4px;top:109.0px;font-size:12px;color:#262626;transform:scaleX(1.0014);transform-origin:0 0;">Cell</span>
<span class="t" style="left:833.44px;top:125.0px;font-size:12px;color:#262626;transform:scaleX(0.9369);transform-origin:0 0;">Styles</span>
<svg style="left:866.75px;top:128.9px" width="5.5" height="3.2" viewBox="0 0 5.5 3.2"><path d="M0 0H5.5L2.75 3.2Z" fill="#6a6a6a"/></svg>
<svg style="left:891px;top:73px" width="28" height="29" viewBox="0 0 28 29"><path shape-rendering="crispEdges" d="M1.5 1.5H15.5V6.5H1.5Z M8.5 1.5V6.5" fill="#fff" stroke="#8a8a8a" stroke-width="1"/><path shape-rendering="crispEdges" d="M12.5 9.5H26.5V14.5H12.5Z" fill="#bdd3ea" stroke="#8a8a8a" stroke-width="1"/><path shape-rendering="crispEdges" d="M19.5 9.5V14.5" stroke="#8a8a8a"/><path shape-rendering="crispEdges" d="M1.5 17.5H15.5V27.5H1.5Z" fill="#fff" stroke="#8a8a8a" stroke-width="1"/><path shape-rendering="crispEdges" d="M8.5 17.5V27.5 M1.5 22.5H15.5" stroke="#8a8a8a"/><path d="M9.6 12H2.8 M5.8 8.9 L2.6 12 L5.8 15.1" fill="none" stroke="#3e7fc6" stroke-width="1.9"/></svg>
<span class="t" style="left:890.01px;top:109.0px;font-size:12px;color:#262626;transform:scaleX(0.9821);transform-origin:0 0;">Insert</span>
<svg style="left:901.75px;top:128.9px" width="5.5" height="3.2" viewBox="0 0 5.5 3.2"><path d="M0 0H5.5L2.75 3.2Z" fill="#6a6a6a"/></svg>
<svg style="left:932px;top:73px" width="32" height="30" viewBox="0 0 32 30"><path shape-rendering="crispEdges" d="M1.5 1.5H15.5V6.5H1.5Z M8.5 1.5V6.5" fill="#fff" stroke="#8a8a8a" stroke-width="1"/><path shape-rendering="crispEdges" d="M7.5 9.5H17.5V14.5H7.5Z" fill="#bdd3ea" stroke="#8a8a8a" stroke-width="1"/><path shape-rendering="crispEdges" d="M13.5 9.5V14.5" stroke="#8a8a8a"/><path shape-rendering="crispEdges" d="M1.5 18.5H15.5V28.5H1.5Z" fill="#fff" stroke="#8a8a8a" stroke-width="1"/><path shape-rendering="crispEdges" d="M8.5 18.5V28.5 M1.5 23.5H15.5" stroke="#8a8a8a"/><path d="M16.2 7.6 C20 9.8 25 14 29.4 19 M29.6 7.8 C25 10.6 20 14.6 16.2 19.4" fill="none" stroke="#d9603b" stroke-width="2.2" stroke-linecap="round"/></svg>
<span class="t" style="left:930.12px;top:109.0px;font-size:12px;color:#262626;transform:scaleX(0.9705);transform-origin:0 0;">Delete</span>
<svg style="left:943.65px;top:128.9px" width="5.5" height="3.2" viewBox="0 0 5.5 3.2"><path d="M0 0H5.5L2.75 3.2Z" fill="#6a6a6a"/></svg>
<svg style="left:974px;top:72px" width="30" height="33" viewBox="0 0 30 33"><path d="M1.5 1V6 M23.5 1V6 M3.4 3.5H21.6 M6 1.2 L3.4 3.5 L6 5.8 M19 1.2 L21.6 3.5 L19 5.8" fill="none" stroke="#3e7fc6" stroke-width="1.1"/><rect x="1" y="7" width="28" height="21" fill="#fff"/><path shape-rendering="crispEdges" d="M8.5 7.5V27.5 M16.5 7.5V27.5 M23.5 7.5V27.5 M1.5 12.5H28.5 M1.5 22.5H28.5" stroke="#c3c3c3" stroke-width="1"/><rect x="9" y="13" width="7" height="9" fill="#4a86c5"/><path shape-rendering="crispEdges" d="M1.5 7.5H28.5V27.5H1.5Z" fill="none" stroke="#8a8a8a" stroke-width="1"/><path d="M1.5 27.5V31.5H8 L10 29.5 H11 V31.5 H17.4 L19.8 29 V27.5" fill="#fff" stroke="#8a8a8a" stroke-width="1"/></svg>
<span class="t" style="left:970.3px;top:109.0px;font-size:12px;color:#262626;transform:scaleX(1.0077);transform-origin:0 0;">Format</span>
<svg style="left:986.85px;top:128.9px" width="5.5" height="3.2" viewBox="0 0 5.5 3.2"><path d="M0 0H5.5L2.75 3.2Z" fill="#6a6a6a"/></svg>
<svg style="left:1022px;top:71px" width="17" height="17" viewBox="0 0 17 17"><path d="M14.8 4 V1.6 H2 L9 8.4 L2 15.4 H14.8 V13" fill="none" stroke="#444" stroke-width="2.1" stroke-linejoin="miter"/></svg>
<span class="t" style="left:1041.89px;top:75.0px;font-size:12px;color:#262626;transform:scaleX(1.0216);transform-origin:0 0;">AutoSum</span>
<svg style="left:1101.65px;top:78.9px" width="5.5" height="3.2" viewBox="0 0 5.5 3.2"><path d="M0 0H5.5L2.75 3.2Z" fill="#6a6a6a"/></svg>
<svg style="left:1023px;top:94px" width="16" height="17" viewBox="0 0 16 17"><rect x="1.5" y="1.5" width="13" height="15" fill="#fff" stroke="#777"/><rect x="1" y="1" width="14" height="3.2" fill="#777"/><path d="M8 6 V13.4 M4.6 10 L8 13.6 L11.4 10" fill="none" stroke="#3e7fc6" stroke-width="1.7"/></svg>
<span class="t" style="left:1041.93px;top:98.0px;font-size:12px;color:#262626;transform:scaleX(0.9555);transform-origin:0 0;">Fill</span>
<svg style="left:1059.75px;top:101.9px" width="5.5" height="3.2" viewBox="0 0 5.5 3.2"><path d="M0 0H5.5L2.75 3.2Z" fill="#6a6a6a"/></svg>
<svg style="left:1023px;top:118px" width="16" height="14" viewBox="0 0 16 14"><path d="M1.2 9.6 L9.6 1.6 L13.8 5.8 L5.4 13.6Z" fill="#e8879b"/><path d="M2.6 8.4 L6.6 12.4" stroke="#f6d5dc" stroke-width="1"/></svg>
<span class="t" style="left:1041.93px;top:120.6px;font-size:12px;color:#262626;transform:scaleX(0.9532);transform-origin:0 0;">Clear</span>
<svg style="left:1071.85px;top:124.9px" width="5.5" height="3.2" viewBox="0 0 5.5 3.2"><path d="M0 0H5.5L2.75 3.2Z" fill="#6a6a6a"/></svg>
<span class="t" style="left:1117.6px;top:72.6px;font-size:17px;color:#3e7fc6;-webkit-text-stroke:0.35px #3e7fc6;">A</span>
<span class="t" style="left:1118.6px;top:87px;font-size:17px;color:#9b59b6;-webkit-text-stroke:0.35px #9b59b6;">Z</span>
<svg style="left:1130px;top:81px" width="18" height="17" viewBox="0 0 18 17"><path d="M0.6 1 H17 L10.4 8.6 V15.4 H7.2 V8.6Z" fill="#7a7a7a"/><path d="M4.6 3.4 L8.1 7.8 V14.4 H9.5 V7.8 L10.6 6.4" fill="none" stroke="#f3f3f3" stroke-width="1"/></svg>
<span class="t" style="left:1115.89px;top:109.0px;font-size:12px;color:#262626;transform:scaleX(1.0199);transform-origin:0 0;">Sort &amp;</span>
<span class="t" style="left:1116.01px;top:125.0px;font-size:12px;color:#262626;transform:scaleX(0.9893);transform-origin:0 0;">Filter</span>
<svg style="left:1144.55px;top:128.9px" width="5.5" height="3.2" viewBox="0 0 5.5 3.2"><path d="M0 0H5.5L2.75 3.2Z" fill="#6a6a6a"/></svg>
<svg style="left:1161px;top:73px" width="30" height="29" viewBox="0 0 30 29"><circle cx="18.4" cy="10.6" r="8.6" fill="#fff" stroke="#3e7fc6" stroke-width="2.2"/><path d="M11.8 17.2 L2.6 26.2" stroke="#3e7fc6" stroke-width="3.4" stroke-linecap="round"/></svg>
<span class="t" style="left:1157.88px;top:109.0px;font-size:12px;color:#262626;transform:scaleX(1.0302);transform-origin:0 0;">Find &amp;</span>
<span class="t" style="left:1155.73px;top:125.0px;font-size:12px;color:#262626;transform:scaleX(0.9546);transform-origin:0 0;">Select</span>
<svg style="left:1189.65px;top:128.9px" width="5.5" height="3.2" viewBox="0 0 5.5 3.2"><path d="M0 0H5.5L2.75 3.2Z" fill="#6a6a6a"/></svg>
</div></body></html>
